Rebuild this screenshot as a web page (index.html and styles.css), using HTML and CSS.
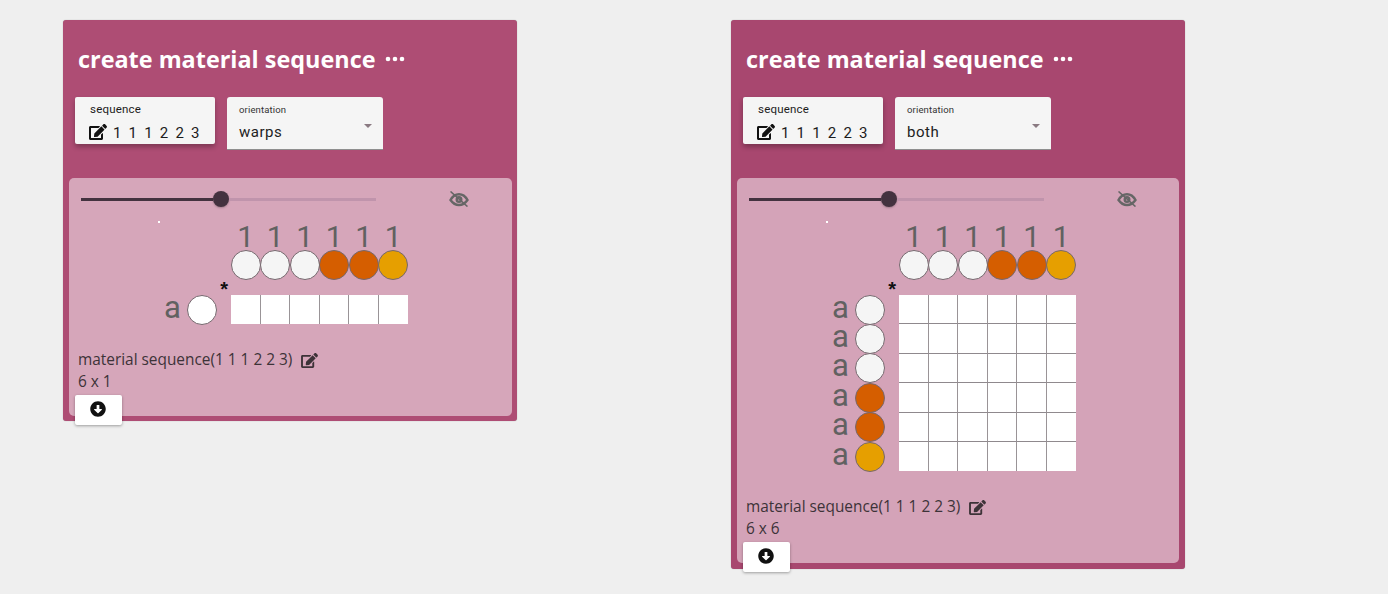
FILE: index.html
```html
<!DOCTYPE html>
<html lang="en">
<head>
<meta charset="utf-8">
<title>create material sequence</title>
<link rel="stylesheet" href="styles.css">
</head>
<body>
<svg class="defs" width="0" height="0" aria-hidden="true">
  <symbol id="i-edit" viewBox="0 0 576 512"><path d="M402.6 83.2l90.2 90.2c3.8 3.8 3.8 10 0 13.8L274.4 405.6l-92.8 10.3c-12.4 1.4-22.9-9.1-21.5-21.5l10.3-92.8L388.8 83.2c3.8-3.8 10-3.8 13.8 0zm162-22.9l-48.8-48.8c-15.2-15.2-39.9-15.2-55.2 0l-35.4 35.4c-3.8 3.8-3.8 10 0 13.8l90.2 90.2c3.8 3.8 10 3.8 13.8 0l35.4-35.4c15.2-15.3 15.2-40 0-55.2zM384 346.2V448H64V128h229.8c3.2 0 6.2-1.3 8.5-3.5l40-40c7.6-7.6 2.2-20.5-8.5-20.5H48C21.5 64 0 85.5 0 112v352c0 26.5 21.5 48 48 48h352c26.5 0 48-21.5 48-48V306.2c0-10.7-12.9-16-20.5-8.5l-40 40c-2.2 2.3-3.5 5.3-3.5 8.5z"/></symbol>
  <symbol id="i-down" viewBox="0 0 512 512"><path d="M504 256c0 137-111 248-248 248S8 393 8 256 119 8 256 8s248 111 248 248zM212 140v116h-70.9c-10.7 0-16.1 13-8.5 20.5l114.9 114.3c4.7 4.7 12.2 4.7 16.9 0l114.9-114.3c7.6-7.6 2.2-20.5-8.5-20.5H300V140c0-6.6-5.4-12-12-12h-64c-6.6 0-12 5.4-12 12z"/></symbol>
  <symbol id="i-eye" viewBox="0 0 20 16"><path class="eye-line" d="M1.500 9C4 4.500 7 3.200 10 3.200s6 1.300 8.500 5.800C16 12.500 13 14 10 14S4 12.500 1.500 9z"/><circle class="eye-line" cx="10" cy="8.600" r="2.300"/><path class="eye-slash" d="M1.500 .5 18.500 15.500"/></symbol>
</svg>

<main class="canvas">
  <section class="card card-a">
    <header class="head">
      <h1 class="title">create material sequence</h1>
      <svg class="dots" viewBox="0 0 20 6"><circle cx="3" cy="3" r="2.300"/><circle cx="10" cy="3" r="2.300"/><circle cx="17" cy="3" r="2.300"/></svg>
    </header>
    <div class="controls">
      <div class="seq">
        <div class="seq-label">sequence</div>
        <div class="seq-value"><svg class="seq-edit"><use href="#i-edit"/></svg><span class="digits"><span>1</span><span>1</span><span>1</span><span>2</span><span>2</span><span>3</span></span></div>
      </div>
      <div class="select">
        <div class="select-label">orientation</div>
        <div class="select-value">warps</div>
        <span class="caret"></span>
      </div>
    </div>
    <div class="panel">
      <div class="slider-row">
        <div class="slider"><span class="fill"></span><span class="thumb"></span><span class="rest"></span></div>
        <svg class="eye"><use href="#i-eye"/></svg>
      </div>
      <div class="speck"></div>
      <div class="draft">
        <div class="corner"></div>
        <div class="nums"><span>1</span><span>1</span><span>1</span><span>1</span><span>1</span><span>1</span></div>
        <div class="corner"></div>
        <div class="dots-row"><span class="dot white"></span><span class="dot white"></span><span class="dot white"></span><span class="dot orange"></span><span class="dot orange"></span><span class="dot amber"></span></div>
        <div class="star">*</div>
        <div class="corner"></div>
        <div class="rows">
          <div class="row"><span class="letter">a</span><span class="dot pure"></span></div>
        </div>
        <div class="cells">
          <span class="cell"></span><span class="cell"></span><span class="cell"></span><span class="cell"></span><span class="cell"></span><span class="cell"></span>
        </div>
      </div>
      <p class="caption">material sequence(1 1 1 2 2 3)<svg class="cap-edit"><use href="#i-edit"/></svg><br>6 x 1</p>
      <button class="dl" type="button"><svg class="dl-icon"><use href="#i-down"/></svg></button>
    </div>
  </section>

  <section class="card card-b">
    <header class="head">
      <h1 class="title">create material sequence</h1>
      <svg class="dots" viewBox="0 0 20 6"><circle cx="3" cy="3" r="2.300"/><circle cx="10" cy="3" r="2.300"/><circle cx="17" cy="3" r="2.300"/></svg>
    </header>
    <div class="controls">
      <div class="seq">
        <div class="seq-label">sequence</div>
        <div class="seq-value"><svg class="seq-edit"><use href="#i-edit"/></svg><span class="digits"><span>1</span><span>1</span><span>1</span><span>2</span><span>2</span><span>3</span></span></div>
      </div>
      <div class="select">
        <div class="select-label">orientation</div>
        <div class="select-value">both</div>
        <span class="caret"></span>
      </div>
    </div>
    <div class="panel">
      <div class="slider-row">
        <div class="slider"><span class="fill"></span><span class="thumb"></span><span class="rest"></span></div>
        <svg class="eye"><use href="#i-eye"/></svg>
      </div>
      <div class="speck"></div>
      <div class="draft">
        <div class="corner"></div>
        <div class="nums"><span>1</span><span>1</span><span>1</span><span>1</span><span>1</span><span>1</span></div>
        <div class="corner"></div>
        <div class="dots-row"><span class="dot white"></span><span class="dot white"></span><span class="dot white"></span><span class="dot orange"></span><span class="dot orange"></span><span class="dot amber"></span></div>
        <div class="star">*</div>
        <div class="corner"></div>
        <div class="rows">
          <div class="row"><span class="letter">a</span><span class="dot white"></span></div>
          <div class="row"><span class="letter">a</span><span class="dot white"></span></div>
          <div class="row"><span class="letter">a</span><span class="dot white"></span></div>
          <div class="row"><span class="letter">a</span><span class="dot orange"></span></div>
          <div class="row"><span class="letter">a</span><span class="dot orange"></span></div>
          <div class="row"><span class="letter">a</span><span class="dot amber"></span></div>
        </div>
        <div class="cells">
          <span class="cell"></span><span class="cell"></span><span class="cell"></span><span class="cell"></span><span class="cell"></span><span class="cell"></span>
          <span class="cell"></span><span class="cell"></span><span class="cell"></span><span class="cell"></span><span class="cell"></span><span class="cell"></span>
          <span class="cell"></span><span class="cell"></span><span class="cell"></span><span class="cell"></span><span class="cell"></span><span class="cell"></span>
          <span class="cell"></span><span class="cell"></span><span class="cell"></span><span class="cell"></span><span class="cell"></span><span class="cell"></span>
          <span class="cell"></span><span class="cell"></span><span class="cell"></span><span class="cell"></span><span class="cell"></span><span class="cell"></span>
          <span class="cell"></span><span class="cell"></span><span class="cell"></span><span class="cell"></span><span class="cell"></span><span class="cell"></span>
        </div>
      </div>
      <p class="caption">material sequence(1 1 1 2 2 3)<svg class="cap-edit"><use href="#i-edit"/></svg><br>6 x 6</p>
      <button class="dl" type="button"><svg class="dl-icon"><use href="#i-down"/></svg></button>
    </div>
  </section>
</main>
</body>
</html>
```

FILE: styles.css
```css
* { box-sizing: border-box; }

html, body { margin: 0; padding: 0; }

body {
  background: #efefef;
  height: 594px;
  overflow: hidden;
  font-family: "Open Sans", sans-serif;
}

.defs { position: absolute; }

.canvas {
  display: flex;
  align-items: flex-start;
  gap: 214px;
  padding: 20px 0 0 63px;
}

.card {
  width: 454px;
  padding: 0 5px 5px 6px;
  border-radius: 3px;
  box-shadow: 0 0 1px rgba(0, 0, 0, .35);
}

.card-a { background: #ae4d74; }
.card-b { background: #a8476f; padding-right: 6px; padding-bottom: 6px; }

.head {
  display: flex;
  align-items: center;
  height: 77px;
  padding: 0 0 0 9px;
}

.title {
  margin: 0;
  font-size: 23.400px;
  line-height: 32px;
  font-weight: 700;
  color: #fff;
}

.dots {
  width: 20px;
  height: 6px;
  margin-left: 10px;
  fill: #fff;
}

.controls {
  display: flex;
  align-items: flex-start;
  gap: 12px;
  height: 81px;
  padding-left: 6px;
  font-family: Roboto, sans-serif;
}

.seq {
  width: 140px;
  height: 47px;
  background: #f5f5f5;
  border-radius: 2px;
  padding: 6px 0 0 15px;
  box-shadow: 0 3px 5px rgba(0, 0, 0, .28);
  color: #1c1c1c;
}

.seq-label {
  font-size: 11.500px;
  line-height: 13px;
  letter-spacing: .2px;
}

.seq-value {
  display: flex;
  align-items: center;
  margin-top: 8px;
  height: 18px;
}

.seq-edit {
  width: 18px;
  height: 16px;
  margin: -2px 0 0 -1px;
  fill: #111;
}

.digits {
  display: flex;
  margin-left: 6px;
  font-size: 15px;
}

.digits span { width: 15.600px; }

.select {
  position: relative;
  width: 156px;
  height: 53px;
  background: #f5f5f5;
  border-bottom: 1px solid #8f8f8f;
  border-radius: 3px 3px 0 0;
  padding: 7px 0 0 12px;
  color: #222;
}

.select-label {
  font-size: 9.500px;
  line-height: 12px;
  letter-spacing: .15px;
  color: #333;
}

.select-value {
  margin-top: 6px;
  font-size: 15px;
  line-height: 20px;
  letter-spacing: .5px;
}

.caret {
  position: absolute;
  right: 11px;
  top: 27px;
  border-left: 4px solid transparent;
  border-right: 4px solid transparent;
  border-top: 4px solid #8a7a82;
}

.panel {
  display: flow-root;
  background: #d6a6ba;
  border-radius: 5px;
}

.card-b .panel { background: #d4a3b8; }

.slider-row {
  display: flex;
  align-items: center;
  height: 29px;
  padding: 13px 0 0 12px;
}

.slider {
  display: flex;
  align-items: center;
  width: 295px;
  height: 16px;
}

.fill {
  width: 132px;
  height: 3px;
  background: #43323f;
}

.thumb {
  flex: none;
  width: 16px;
  height: 16px;
  border-radius: 50%;
  background: #43323f;
  box-shadow: 0 1px 2px rgba(0, 0, 0, .25);
}

.rest {
  flex: 1;
  height: 3px;
  background: #c094ac;
}

.eye {
  width: 20px;
  height: 16px;
  margin-left: 73px;
}

.eye-line {
  fill: none;
  stroke: #666;
  stroke-width: 2.400;
}

.eye-slash {
  fill: none;
  stroke: #666;
  stroke-width: 1.600;
}

.speck {
  width: 2px;
  height: 2px;
  margin: 14px 0 0 89px;
  background: #fff;
}

.draft {
  display: grid;
  grid-template-columns: 69px 177px;
  grid-template-rows: 27px 30px 15px auto;
  margin-left: 93px;
}

.nums {
  display: grid;
  grid-template-columns: repeat(6, 29.500px);
  font-family: Roboto, sans-serif;
  font-size: 30px;
  line-height: 27px;
  color: #616161;
  text-align: center;
}

.dots-row {
  display: flex;
}

.dots-row .dot { margin-right: -.6px; }

.dot {
  flex: none;
  display: block;
  width: 30px;
  height: 30px;
  border-radius: 50%;
  border: 1px solid #75686e;
}

.white { background: #f5f5f5; }
.pure { background: #fff; }
.orange { background: #d55e00; }
.amber { background: #e69f00; }

.star {
  font-family: "Liberation Sans", sans-serif;
  font-size: 20px;
  font-weight: 700;
  line-height: 18px;
  text-align: right;
  padding-right: 3px;
  color: #111;
}

.rows {
  display: flex;
  flex-direction: column;
}

.row {
  display: flex;
  align-items: center;
  height: 29.400px;
  gap: 6px;
  padding-left: 2px;
}

.letter {
  width: 17px;
  margin-top: -5px;
  font-family: Roboto, sans-serif;
  font-size: 31px;
  line-height: 29px;
  color: #616161;
}

.cells {
  display: grid;
  grid-template-columns: repeat(6, 1fr);
  grid-auto-rows: 29.400px;
  background: #fff;
}

.cell {
  border-right: 1px solid rgba(70, 60, 66, .55);
  border-bottom: 1px solid rgba(70, 60, 66, .6);
}

.cell:nth-child(6n) { border-right: 0; }
.cell:nth-last-child(-n + 6) { border-bottom: 0; }

.caption {
  margin: 25px 0 0 9px;
  font-size: 15.400px;
  line-height: 21.500px;
  color: #3d3338;
}

.cap-edit {
  width: 17px;
  height: 15px;
  margin-left: 9px;
  vertical-align: -3px;
  fill: #3d3338;
}

.dl {
  display: flex;
  align-items: center;
  justify-content: center;
  width: 47px;
  height: 30px;
  margin: 3px 0 -9px 6px;
  padding: 0 2px 2px 0;
  background: #fff;
  border: 0;
  border-radius: 2px;
  box-shadow: 0 1px 3px rgba(0, 0, 0, .35);
}

.dl-icon {
  width: 16px;
  height: 16px;
  fill: #111;
}
```
